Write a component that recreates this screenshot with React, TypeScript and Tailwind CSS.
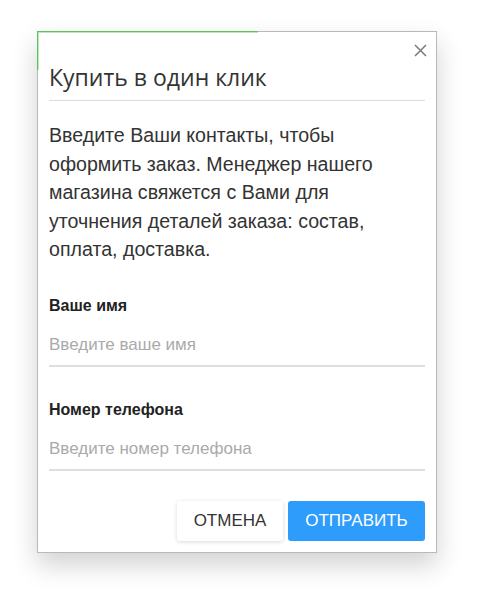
import React from "react";

export default function App() {
  return (
    <div className="h-[600px] w-[477px] bg-white pt-[31px] pl-[37px]" style={{ fontFamily: '"Liberation Sans", Arial, sans-serif' }}>
      <div className="relative w-[400px] h-[522px] border border-[#b9b9b9] bg-white shadow-[0_12px_24px_rgba(0,0,0,0.18)] px-[11px] pb-[11px] flex flex-col">
        <div className="absolute left-[-1px] top-[-1px] z-10 w-[221px] h-[1px] bg-[#5cc45c]" />
        <div className="absolute left-[-1px] top-[-1px] z-10 w-[1px] h-[39px] bg-[#5cc45c]" />
        <div className="absolute left-0 top-0 w-[220px] h-[38px] border-t border-l border-[#5cc45c]/40" />
        <button className="absolute right-[8px] top-[10px] w-[16px] h-[16px] flex items-center justify-center text-[#7a7a7a]">
          <svg width="13" height="13" viewBox="0 0 13 13" fill="none" stroke="currentColor" strokeWidth="1.5">
            <path d="M1 1L12 12M12 1L1 12" />
          </svg>
        </button>
        <h2 className="mt-[29px] text-[23px] leading-[32px] text-[#333] font-normal" style={{ fontFamily: '"Open Sans", sans-serif' }}>
          Купить в один клик
        </h2>
        <div className="mt-[7px] h-px bg-[#dcdcdc]" />
        <p className="mt-[20px] text-[19.6px] leading-[28.5px] text-[#333]">
          Введите Ваши контакты, чтобы оформить заказ. Менеджер нашего магазина свяжется с Вами для уточнения деталей заказа: состав, оплата, доставка.
        </p>
        <label className="mt-[32px] block text-[16px] leading-[20px] font-bold text-[#222]">Ваше имя</label>
        <input
          className="mt-[9px] h-[42px] w-full border-b-2 border-[#dedede] text-[17px] text-[#333] outline-none placeholder:text-[#aaaaaa]"
          placeholder="Введите ваше имя"
        />
        <label className="mt-[33px] block text-[16px] leading-[20px] font-bold text-[#222]">Номер телефона</label>
        <input
          className="mt-[9px] h-[42px] w-full border-b-2 border-[#dedede] text-[17px] text-[#333] outline-none placeholder:text-[#aaaaaa]"
          placeholder="Введите номер телефона"
        />
        <div className="mt-auto flex justify-end gap-[5px]">
          <button className="h-[40px] w-[106px] rounded-[3px] bg-white text-[17px] text-[#333] shadow-[0_1px_4px_rgba(0,0,0,0.15)]">
            ОТМЕНА
          </button>
          <button className="h-[40px] w-[137px] rounded-[3px] bg-[#2e9cfb] text-[17px] text-white">
            ОТПРАВИТЬ
          </button>
        </div>
      </div>
    </div>
  );
}
